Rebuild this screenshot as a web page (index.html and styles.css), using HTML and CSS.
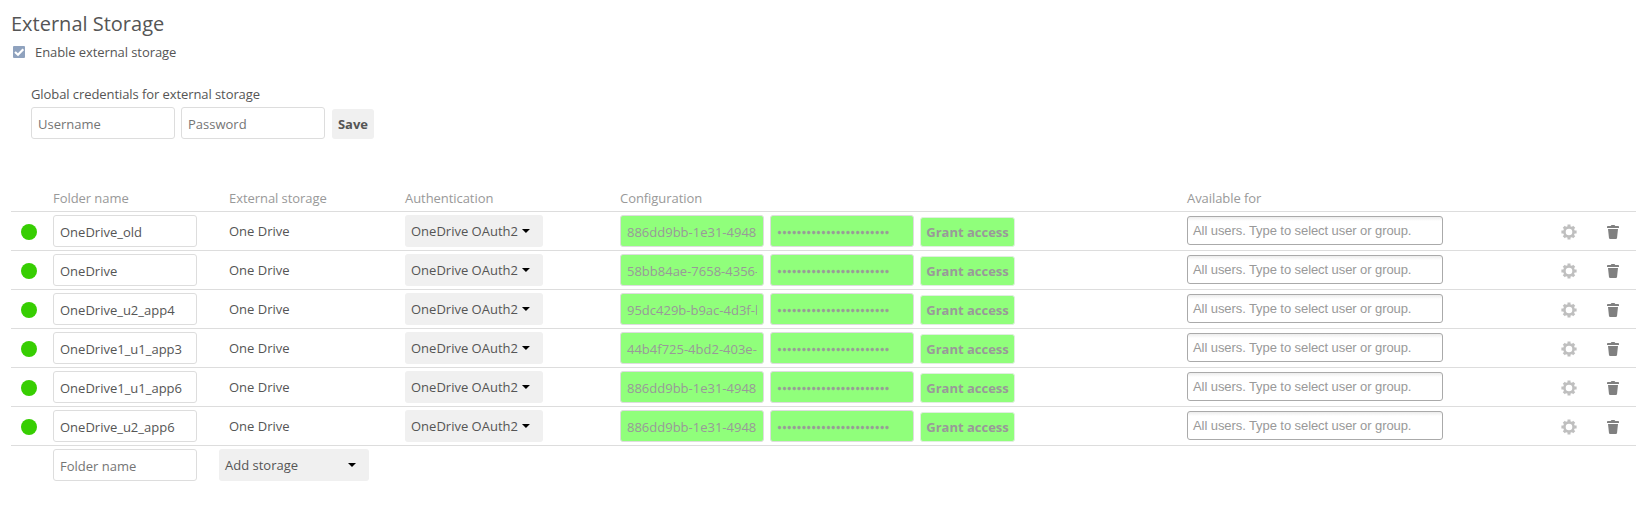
FILE: index.html
```html
<!DOCTYPE html>
<html lang="en">
<head>
<meta charset="utf-8">
<title>External Storage</title>
<link rel="stylesheet" href="styles.css">
</head>
<body>
<svg class="defs" width="0" height="0">
  <symbol id="gear" viewBox="0 0 16 16"><g fill="none" stroke="#bfbfbf"><circle cx="8" cy="8" r="4.6" stroke-width="2.6"/><path stroke-width="3" d="M8 .4v2.4M8 13.2v2.4M.4 8h2.4M13.2 8h2.4M2.8 2.8l1.6 1.6M11.6 11.6l1.6 1.6M2.8 13.2l1.6-1.6M11.6 4.4l1.6-1.6"/></g></symbol>
  <symbol id="trash" viewBox="0 0 12 14"><path fill="#808080" d="M4.5 0h3l.8 1H11.500l.5.8V3H0V1.800L.5 1h3.200zM1 4h10l-1 9.200-.8.800H2.800L2 13.200z"/></symbol>
</svg>
<main class="section">
  <h2 class="title">External Storage</h2>
  <label class="enable"><span class="check"><svg width="12" height="12" viewBox="0 0 12 12"><path d="M2 6l3 2.800L10.300 3.200" fill="none" stroke="#fff" stroke-width="2.200"/></svg></span>Enable external storage</label>
  <form class="credentials">
    <p class="credentials-label">Global credentials for external storage</p>
    <div class="fields"><div class="field hint">Username</div><div class="field hint">Password</div><div class="save">Save</div></div>
  </form>
  <div class="row head"><span></span><span>Folder name</span><span>External storage</span><span>Authentication</span><span>Configuration</span><span>Available for</span></div>
  <div class="row"><i class="status"></i><div class="field">OneDrive_old</div><span class="backend">One Drive</span><div class="select">OneDrive OAuth2<i class="caret"></i></div><div class="fields"><div class="field ok">886dd9bb-1e31-4948</div><div class="field ok secret">•••••••••••••••••••••••</div><div class="grant">Grant access</div></div><div class="users">All users. Type to select user or group.</div><svg class="gear"><use href="#gear"/></svg><svg class="trash"><use href="#trash"/></svg></div>
  <div class="row"><i class="status"></i><div class="field">OneDrive</div><span class="backend">One Drive</span><div class="select">OneDrive OAuth2<i class="caret"></i></div><div class="fields"><div class="field ok">58bb84ae-7658-4356-</div><div class="field ok secret">•••••••••••••••••••••••</div><div class="grant">Grant access</div></div><div class="users">All users. Type to select user or group.</div><svg class="gear"><use href="#gear"/></svg><svg class="trash"><use href="#trash"/></svg></div>
  <div class="row"><i class="status"></i><div class="field">OneDrive_u2_app4</div><span class="backend">One Drive</span><div class="select">OneDrive OAuth2<i class="caret"></i></div><div class="fields"><div class="field ok">95dc429b-b9ac-4d3f-b</div><div class="field ok secret">•••••••••••••••••••••••</div><div class="grant">Grant access</div></div><div class="users">All users. Type to select user or group.</div><svg class="gear"><use href="#gear"/></svg><svg class="trash"><use href="#trash"/></svg></div>
  <div class="row"><i class="status"></i><div class="field">OneDrive1_u1_app3</div><span class="backend">One Drive</span><div class="select">OneDrive OAuth2<i class="caret"></i></div><div class="fields"><div class="field ok">44b4f725-4bd2-403e-</div><div class="field ok secret">•••••••••••••••••••••••</div><div class="grant">Grant access</div></div><div class="users">All users. Type to select user or group.</div><svg class="gear"><use href="#gear"/></svg><svg class="trash"><use href="#trash"/></svg></div>
  <div class="row"><i class="status"></i><div class="field">OneDrive1_u1_app6</div><span class="backend">One Drive</span><div class="select">OneDrive OAuth2<i class="caret"></i></div><div class="fields"><div class="field ok">886dd9bb-1e31-4948</div><div class="field ok secret">•••••••••••••••••••••••</div><div class="grant">Grant access</div></div><div class="users">All users. Type to select user or group.</div><svg class="gear"><use href="#gear"/></svg><svg class="trash"><use href="#trash"/></svg></div>
  <div class="row"><i class="status"></i><div class="field">OneDrive_u2_app6</div><span class="backend">One Drive</span><div class="select">OneDrive OAuth2<i class="caret"></i></div><div class="fields"><div class="field ok">886dd9bb-1e31-4948</div><div class="field ok secret">•••••••••••••••••••••••</div><div class="grant">Grant access</div></div><div class="users">All users. Type to select user or group.</div><svg class="gear"><use href="#gear"/></svg><svg class="trash"><use href="#trash"/></svg></div>
  <div class="row last"><span></span><div class="field hint">Folder name</div><div class="select add">Add storage<i class="caret"></i></div></div>
</main>
</body>
</html>
```
FILE: styles.css
```css
* { box-sizing: border-box; }
body { margin: 0; background: #fff; color: #555; font: 13px/18px "Open Sans", sans-serif; }
.defs { display: block; }
.section { padding: 12px 8px 0 11px; }
.title { margin: 0; font-size: 20px; font-weight: 400; line-height: 24px; height: 31px; }
.enable { display: flex; align-items: center; height: 18px; letter-spacing: -.08px; }
.check { width: 12px; height: 12px; margin: 0 10px 0 2px; background: #8fa2be; border-radius: 1px; }
.check svg { display: block; }
.credentials { margin: 0; padding: 24px 0 0 20px; height: 116px; }
.credentials-label { margin: 0 0 4px; letter-spacing: -.08px; }
.fields { display: flex; align-items: flex-start; gap: 6px; }
.field { width: 144px; height: 32px; padding: 0 6px; border: 1px solid #ddd; border-radius: 3px; line-height: 32px; white-space: nowrap; overflow: clip; overflow-clip-margin: content-box; background: #fff; }
.hint { color: #757575; }
.ok { background: #90ff7b; color: #999; }
.secret { -webkit-text-stroke: .4px #999; }
.save { width: 42px; height: 30px; margin: 2px 0 0 1px; border-radius: 3px; background: #f0f0f0; font-weight: 700; line-height: 31px; text-align: center; }
.row { display: grid; grid-template-columns: 42px 176px 176px 215px 567px 374px 46px auto; align-items: start; height: 39px; padding-top: 3px; border-bottom: 1px solid #ddd; }
.head { height: 35px; padding-top: 10px; color: #999; line-height: 23px; letter-spacing: -.06px; }
.last { border: 0; }
.status { width: 16px; height: 16px; margin: 9px 0 0 10px; border-radius: 50%; background: #37ce02; }
.backend { line-height: 32px; }
.select { display: flex; align-items: center; gap: 4px; width: 138px; height: 32px; padding: 0 6px; border-radius: 3px; background: #f0f0f0; white-space: nowrap; }
.caret { width: 8px; height: 4px; background: #000; clip-path: polygon(0 0, 100% 0, 50% 100%); }
.add { width: 150px; margin-left: -10px; justify-content: space-between; padding-right: 13px; }
.grant { display: flex; justify-content: center; width: 95px; height: 30px; margin-top: 2px; border: 1px solid #e0eedf; border-radius: 3px; background: #90ff7b; color: #999; font-weight: 700; line-height: 29px; white-space: nowrap; }
.users { width: 256px; height: 29px; margin-top: 1px; padding-left: 5px; border: 1px solid #aaa; border-radius: 3px; background: linear-gradient(#eee 1%, #fff 15%); color: #999; font: 13px/27px "Liberation Sans", sans-serif; letter-spacing: -.08px; white-space: nowrap; }
.gear { width: 16px; height: 16px; margin-top: 9px; }
.trash { width: 12px; height: 14px; margin-top: 10px; }
```
